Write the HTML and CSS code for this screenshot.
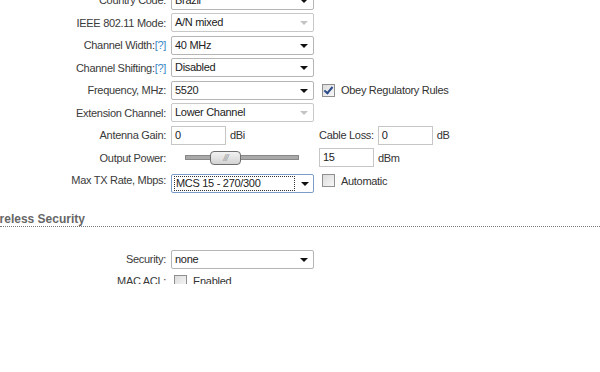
FILE: index.html
```html
<!DOCTYPE html>
<html lang="en">
<head>
    <meta charset="UTF-8">
    <title>Wireless Settings</title>
    <link rel="stylesheet" href="styles.css">
</head>
<body>

    <div class="form">
        <div class="row">
            <label>Country Code:</label>
            <div class="select">Brazil<span class="arrow"></span></div>
        </div>
        <div class="row">
            <label>IEEE 802.11 Mode:</label>
            <div class="select disabled">A/N mixed<span class="arrow"></span></div>
        </div>
        <div class="row">
            <label>Channel Width:<a class="help">[?]</a></label>
            <div class="select">40 MHz<span class="arrow"></span></div>
        </div>
        <div class="row">
            <label>Channel Shifting:<a class="help">[?]</a></label>
            <div class="select">Disabled<span class="arrow"></span></div>
        </div>
        <div class="row">
            <label>Frequency, MHz:</label>
            <div class="select">5520<span class="arrow"></span></div>
            <div class="extra"><span class="check checked"></span>Obey Regulatory Rules</div>
        </div>
        <div class="row">
            <label>Extension Channel:</label>
            <div class="select disabled">Lower Channel<span class="arrow"></span></div>
        </div>
        <div class="row">
            <label>Antenna Gain:</label>
            <div class="field"><span class="input">0</span>dBi</div>
            <div class="extra"><span class="sublabel">Cable Loss:</span><span class="input">0</span>dB</div>
        </div>
        <div class="row">
            <label>Output Power:</label>
            <div class="slider"><span class="track"></span><span class="handle">///</span></div>
            <div class="extra"><span class="input">15</span>dBm</div>
        </div>
        <div class="row tall">
            <label>Max TX Rate, Mbps:</label>
            <div class="select focused"><span class="focus">MCS 15 - 270/300</span><span class="arrow"></span></div>
            <div class="extra"><span class="check"></span>Automatic</div>
        </div>
    </div>

    <h3 class="section">Wireless Security</h3>

    <div class="form second">
        <div class="row">
            <label>Security:</label>
            <div class="select">none<span class="arrow"></span></div>
        </div>
        <div class="row">
            <label>MAC ACL:</label>
            <div class="extra"><span class="check"></span>Enabled</div>
        </div>
    </div>

</body>
</html>
```

FILE: styles.css
```css
body {
    margin: 0;
    font-family: "Liberation Sans", Arial, sans-serif;
    font-size: 11px;
    letter-spacing: -0.3px;
    color: #333;
    background: #fff;
    overflow: hidden;
}
.form {
    margin-top: -11px;
}
.row {
    display: grid;
    grid-template-columns: 166px 143px auto;
    column-gap: 5px;
    align-items: center;
    height: 22.5px;
}
.row.tall {
    height: 28px;
    align-items: start;
    padding-top: 5px;
}
.row label {
    text-align: right;
    color: #3a3a3a;
}
.help {
    color: #3b87c4;
}
.select {
    position: relative;
    height: 17px;
    line-height: 17px;
    border: 1px solid #b5b5b5;
    border-radius: 2px;
    padding-left: 3px;
    background: #fff;
    color: #222;
}
.select .arrow {
    position: absolute;
    right: 5px;
    top: 7px;
    border-left: 4px solid transparent;
    border-right: 4px solid transparent;
    border-top: 4px solid #111;
}
.select.disabled {
    border-color: #c8c8c8;
}
.select.disabled .arrow {
    border-top-color: #c4c4c4;
}
.select.focused {
    border-color: #7a9cc8;
}
.focus {
    display: block;
    margin: 1px 18px 1px -1px;
    padding-left: 1px;
    height: 13px;
    line-height: 13px;
    border: 1px dotted #333;
}
.select.focused .arrow {
    right: 4px;
}
.input {
    display: inline-block;
    box-sizing: border-box;
    width: 55px;
    height: 19px;
    line-height: 17px;
    border: 1px solid #c6c6c6;
    padding-left: 3px;
    margin-right: 4px;
    color: #222;
    vertical-align: middle;
}
.field, .extra {
    display: flex;
    align-items: center;
}
.sublabel {
    margin-right: 4px;
}
.check {
    display: inline-block;
    box-sizing: border-box;
    width: 13px;
    height: 13px;
    border: 1px solid #8f8f8f;
    background: linear-gradient(135deg, #dcdcdc, #f7f7f7);
    margin: 0 6px 0 3px;
    position: relative;
}
.check.checked::after {
    content: "";
    position: absolute;
    left: 3px;
    top: 0;
    width: 3px;
    height: 7px;
    border: solid #2b4a8a;
    border-width: 0 2px 2px 0;
    transform: rotate(40deg);
}
.slider {
    position: relative;
    height: 14px;
}
.track {
    position: absolute;
    left: 14px;
    top: 4px;
    width: 112px;
    height: 3px;
    background: #a9a9a9;
    border: 1px solid #888;
}
.handle {
    position: absolute;
    left: 39px;
    top: 0;
    box-sizing: border-box;
    width: 31px;
    height: 14px;
    border: 1px solid #6e6e6e;
    border-radius: 4px;
    background: linear-gradient(#f2f2f2, #d3d3d3);
    color: #9a9a9a;
    font-size: 9px;
    font-style: italic;
    line-height: 12px;
    text-align: center;
    letter-spacing: -1px;
}
.section {
    margin: 9px 0 0;
    padding: 0;
    text-indent: -15px;
    font-size: 12px;
    font-weight: bold;
    letter-spacing: 0;
    color: #666;
    border-bottom: 1px dotted #777;
    height: 15px;
    line-height: 16px;
}
.form.second {
    margin-top: 21px;
    height: 36px;
    overflow: hidden;
}
.form.second .row {
    height: 22px;
}
```
